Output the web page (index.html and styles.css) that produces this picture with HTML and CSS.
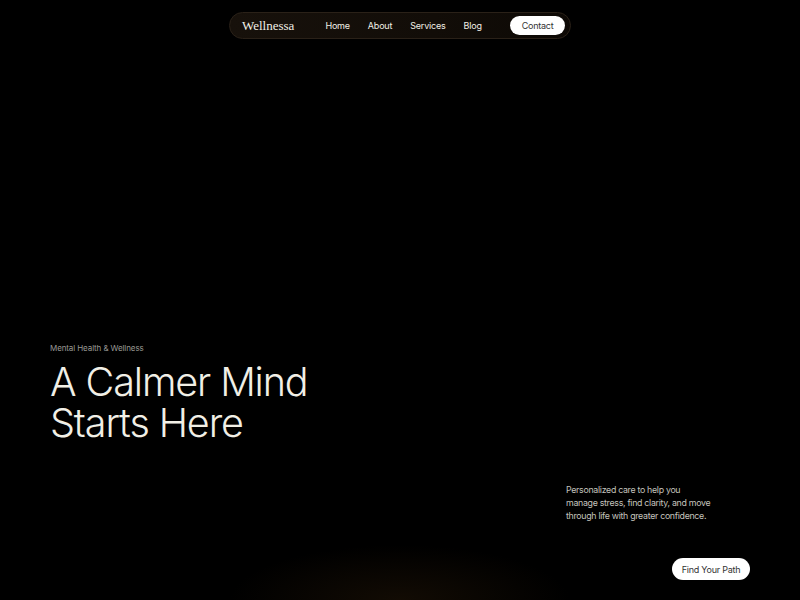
FILE: index.html
```html
<!DOCTYPE html>
<html lang="en">
<head>
    <meta charset="UTF-8">
    <meta name="viewport" content="width=device-width, initial-scale=1.0">
    <title>Wellnessa</title>
    <link rel="stylesheet" href="styles.css">
</head>
<body>

<div class="page">
    <nav class="nav">
        <span class="logo">Wellnessa</span>
        <div class="links">
            <a href="#">Home</a>
            <a href="#">About</a>
            <a href="#">Services</a>
            <a href="#">Blog</a>
        </div>
        <a href="#" class="btn contact">Contact</a>
    </nav>

    <main class="hero">
        <div class="hero-left">
            <p class="tag">Mental Health &amp; Wellness</p>
            <h1>A Calmer Mind<br>Starts Here</h1>
        </div>
        <div class="hero-right">
            <p class="intro">Personalized care to help you manage stress, find clarity, and move through life with greater confidence.</p>
            <a href="#" class="btn cta">Find Your Path</a>
        </div>
    </main>
</div>

</body>
</html>
```

FILE: styles.css
```css
html, body {
    margin: 0;
    padding: 0;
}
body {
    background: #000;
    font-family: Inter, "Noto Sans", sans-serif;
    color: #f1efe6;
    overflow: hidden;
}
.page {
    height: 600px;
    box-sizing: border-box;
    padding: 12px 50px 20px;
    display: flex;
    flex-direction: column;
    background: radial-gradient(ellipse 170px 55px at 50% 100%, rgba(40, 25, 8, 0.45), rgba(0, 0, 0, 0));
}
.nav {
    align-self: center;
    width: 342px;
    height: 27px;
    box-sizing: border-box;
    display: flex;
    align-items: center;
    padding: 0 5px 0 12px;
    border: 1px solid #2a2118;
    border-radius: 14px;
    background: linear-gradient(to right, #17110b, #120d08 60%, #0d0905);
}
.logo {
    font-family: "Liberation Serif", "DejaVu Serif", serif;
    font-size: 13px;
    color: #f1efe6;
}
.links {
    display: flex;
    gap: 18px;
    margin-left: 31px;
}
.links a {
    color: #f1efe6;
    text-decoration: none;
    font-size: 9px;
    letter-spacing: -0.2px;
}
.btn {
    display: inline-flex;
    align-items: center;
    justify-content: center;
    background: #fff;
    color: #333;
    text-decoration: none;
    border-radius: 12px;
    font-size: 9px;
    letter-spacing: -0.25px;
}
.contact {
    margin-left: auto;
    width: 55px;
    height: 19px;
}
.hero {
    flex: 1;
    display: flex;
    justify-content: space-between;
}
.hero-left {
    margin-top: 304px;
}
.tag {
    margin: 0;
    font-size: 8px;
    color: #9a9a95;
    line-height: 10px;
    letter-spacing: -0.1px;
}
h1 {
    margin: 9px 0 0;
    font-size: 39.5px;
    font-weight: 300;
    line-height: 41px;
    letter-spacing: -1.1px;
    color: #f1efe6;
}
.hero-right {
    width: 184px;
    display: flex;
    flex-direction: column;
}
.intro {
    margin: 444px 0 0;
    width: 147px;
    font-size: 8.8px;
    line-height: 13px;
    letter-spacing: -0.3px;
    color: #c4c3bd;
}
.cta {
    align-self: flex-end;
    margin-top: auto;
    width: 78px;
    height: 22px;
    border-radius: 11px;
}
```
